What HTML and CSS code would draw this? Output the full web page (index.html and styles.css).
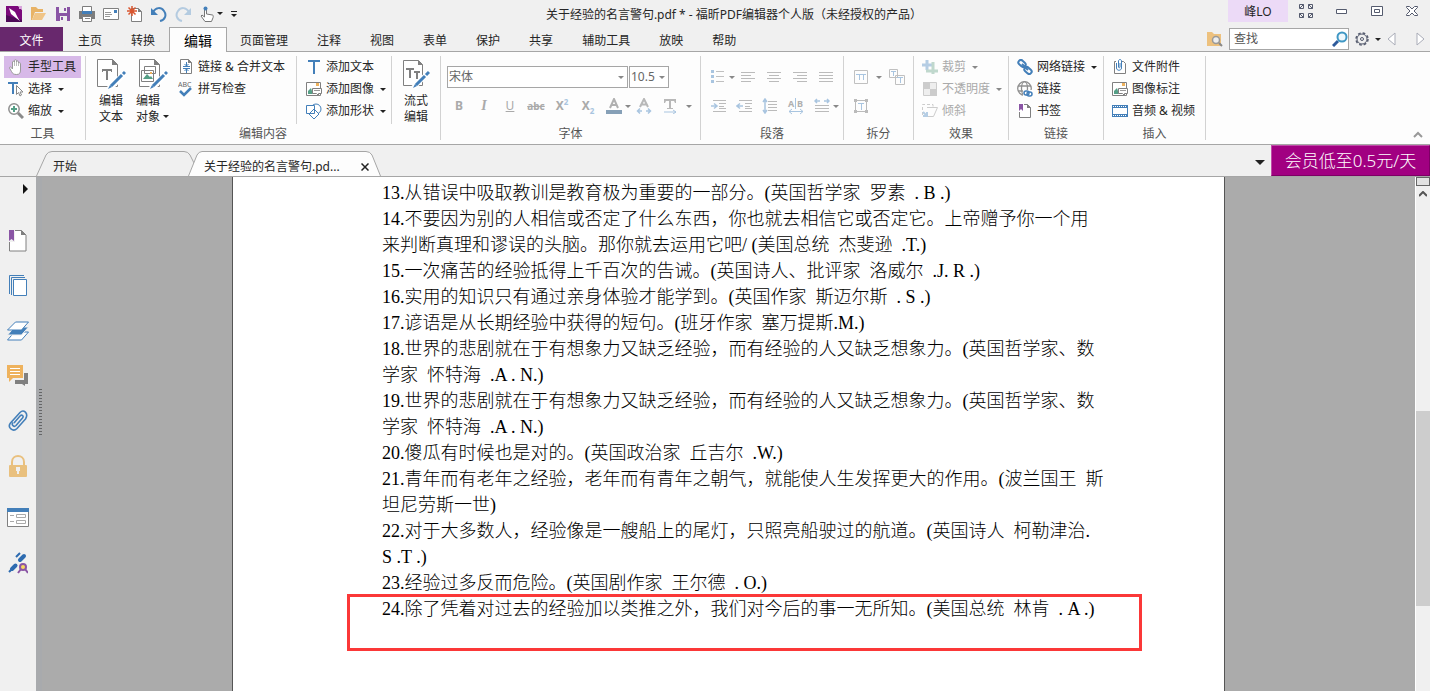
FILE: index.html
```html
<!DOCTYPE html>
<html lang="zh-CN">
<head>
  <meta charset="UTF-8" />
  <meta name="viewport" content="width=device-width, initial-scale=1.0"/>
  <title>关于经验的名言警句.pdf * - 福昕PDF编辑器个人版</title>
  <link rel="stylesheet" href="styles.css">
</head>
<body>

  <!-- Title bar -->
  <header class="titlebar">
    <div class="quick">
      <button class="icon-btn" aria-label="Foxit"><svg width="16" height="16" viewBox="0 0 16 16"><path fill="#7b0a7b" d="M0 0h12l4 4v12H0z"/><path fill="#4e0a58" d="M0 9l16 5v2H0z"/><path fill="#d9a6dc" d="M13 0h3v3h-3z"/><path fill="#fff" d="M3 2l6 4 3 6 2 3-4-3-5-4z"/></svg></button>
      <button class="icon-btn" aria-label="打开"><svg width="17" height="16" viewBox="0 0 17 16"><path fill="#e8b366" d="M1 1h5l2 2h5v3H5L2 14H1z"/><path fill="#f0c587" d="M5 7h11l-4 7H2z"/></svg></button>
      <button class="icon-btn" aria-label="保存"><svg width="16" height="16" viewBox="0 0 16 16"><path fill="#8a55a5" d="M1 1h14v14H1z"/><path fill="#f0f0f0" d="M4 1h8v6H4zM5 10h7v5H5z"/><path fill="#8a55a5" d="M9 2h2v3H9zM6 11h2v3H6z"/></svg></button>
      <button class="icon-btn" aria-label="打印"><svg width="16" height="16" viewBox="0 0 16 16"><path fill="#7d7d7d" d="M0 5h16v8h-3v-2H3v2H0z"/><path fill="#fff" stroke="#7d7d7d" d="M3.500.5h9v5h-9zM3.500 10.500h9v5h-9z"/><path fill="#437fb9" d="M3 5h10v3H3z"/><path stroke="#888" d="M6 12.500h5"/></svg></button>
      <button class="icon-btn" aria-label="邮件"><svg width="16" height="16" viewBox="0 0 16 16"><path fill="#fff" stroke="#808080" d="M.5 2.500h15v11H.5z"/><path stroke="#999" d="M2 6.500h6M2 8.500h7M2 10.500h5"/><path fill="#437fb9" d="M11 4h3v3h-3z"/></svg></button>
      <button class="icon-btn" aria-label="新建"><svg width="16" height="16" viewBox="0 0 16 16"><path fill="#fff" stroke="#808080" d="M4.500 2.500h7l3 3v10h-10z"/><path fill="#808080" d="M11 2l4 4h-4z"/><path stroke="#d9562f" stroke-width="1.500" d="M5 0v10M0 5h10M1.500 1.500l7 7M8.500 1.500l-7 7"/></svg></button>
      <button class="icon-btn" aria-label="撤销"><svg width="16" height="16" viewBox="0 0 16 16" fill="none"><path stroke="#437fb9" stroke-width="2" d="M2 6c3-5 8-5 11-1s1 9-4 10"/><path fill="#437fb9" d="M0 2v7h7z"/></svg></button>
      <button class="icon-btn" aria-label="重做"><svg width="16" height="16" viewBox="0 0 16 16" fill="none"><path stroke="#b4cbe0" stroke-width="2" d="M14 6C11 1 6 1 3 5s-1 9 4 10"/><path fill="#b4cbe0" d="M16 2v7H9z"/></svg></button>
      <button class="icon-btn" aria-label="触摸模式"><svg width="16" height="16" viewBox="0 0 16 16"><path fill="#fff" stroke="#777" d="M5.500 11V3c0-1 2-1 2 0v5l6 1c1 0 1 2 0 4l-1 2.500H6L2 10l1-1z"/><circle cx="6.500" cy="2.500" r="2" fill="#437fb9"/></svg></button>
      <span class="caret"></span>
      <button class="icon-btn customize" aria-label="自定义"><span class="caret"></span></button>
    </div>
    <h1 class="title">关于经验的名言警句.pdf * - 福昕PDF编辑器个人版（未经授权的产品）</h1>
    <div class="window-tools">
      <button class="user">峰LO</button>
      <button class="win-btn" aria-label="全屏"><svg width="14" height="14" viewBox="0 0 14 14" fill="none" stroke="#555b6e"><path d="M.5 4V.5H4.500V4.500H.5l4-4M9.500 .5h4v4h-4zM9.500.5l4 4M.5 9.500h4v4h-4zM.5 9.500l4 4M9.500 9.500h4v4h-4zM13.500 9.500l-4 4"/></svg></button>
      <button class="win-btn" aria-label="最小化"><svg width="12" height="12" viewBox="0 0 12 12"><path fill="#fff" stroke="#555b6e" d="M1.500 4.500h10v4h-10z"/></svg></button>
      <button class="win-btn" aria-label="还原"><svg width="12" height="12" viewBox="0 0 12 12"><path fill="#fff" stroke="#555b6e" d="M.5 1.500h11v9H.5zM3.500 4.500h5v3h-5z"/></svg></button>
      <button class="win-btn" aria-label="关闭"><svg width="12" height="12" viewBox="0 0 12 12"><path fill="#fff" stroke="#555b6e" d="M.5 1.500h3L6 4l2.500-2.500h3v1L8 6l3.500 3.500v1h-3L6 8l-2.500 2.500h-3v-1L4 6 .5 2.500z"/></svg></button>
    </div>
  </header>

  <!-- Ribbon tabs -->
  <nav class="tabs">
    <button class="tab file">文件</button>
    <button class="tab">主页</button>
    <button class="tab">转换</button>
    <button class="tab active">编辑</button>
    <button class="tab">页面管理</button>
    <button class="tab">注释</button>
    <button class="tab">视图</button>
    <button class="tab">表单</button>
    <button class="tab">保护</button>
    <button class="tab">共享</button>
    <button class="tab">辅助工具</button>
    <button class="tab">放映</button>
    <button class="tab">帮助</button>
    <div class="search-area">
      <svg width="17" height="16" viewBox="0 0 17 16"><path fill="#edc17e" d="M1 1h5l2 2h7v12H1z"/><circle cx="10" cy="9" r="3.500" fill="#eee" stroke="#999" stroke-width="1.500"/><path stroke="#888" stroke-width="2" d="M13 12l3 3"/></svg>
      <div class="search">
        <input type="text" placeholder="查找" aria-label="查找" />
        <svg width="16" height="16" viewBox="0 0 16 16"><path stroke="#2d5a9b" stroke-width="3" d="M1 15l5-5"/><circle cx="10" cy="6" r="4.500" fill="#eef8fd" stroke="#3f97c4" stroke-width="2"/></svg>
      </div>
      <button class="icon-btn" aria-label="设置"><svg width="14" height="14" viewBox="0 0 14 14" fill="none" stroke="#555b6e"><circle cx="7" cy="7" r="6" stroke-width="1.500" stroke-dasharray="2.700 2"/><circle cx="7" cy="7" r="5"/><circle cx="7" cy="7" r="1.500"/></svg></button>
      <span class="caret"></span>
      <button class="nav-btn" aria-label="上一个"><svg width="9" height="14" viewBox="0 0 9 14"><path fill="#fff" stroke="#aaadb8" d="M8 1v12L1 7z"/></svg></button>
      <button class="nav-btn next" aria-label="下一个"><svg width="9" height="14" viewBox="0 0 9 14"><path fill="#fff" stroke="#aaadb8" d="M1 1v12l7-6z"/></svg></button>
    </div>
  </nav>

  <!-- Ribbon -->
  <section class="ribbon">
    <div class="group g-tools">
      <div class="group-body">
        <div class="rows">
          <button class="row-btn selected"><svg width="16" height="16" viewBox="0 0 16 16"><path fill="#fff" stroke="#999" d="M4.500 10V3c0-1 2-1 2 0V1.500c0-1 2-1 2 0V3c0-1.500 2-1.500 2 0v1.500c0-1 2-1 2 0V11c0 3-1 4.500-4 4.500-3 0-4-1-5-3L1.500 9c0-1.500 1.500-1.500 3 1z"/><path stroke="#bbb" d="M6.500 3v4M8.500 3v4M10.500 4v3"/></svg>手型工具</button>
          <button class="row-btn"><svg width="16" height="16" viewBox="0 0 16 16"><path fill="#437fb9" d="M0 1h10v2H6v10H4V3H0z"/><path fill="#fff" stroke="#888" d="M8.500 4.500v9l2-2 1.500 3.500 1.500-1-1.500-3h3z"/></svg>选择<span class="caret"></span></button>
          <button class="row-btn"><svg width="16" height="16" viewBox="0 0 16 16"><circle cx="6" cy="6" r="5.200" fill="#fff" stroke="#909090" stroke-width="1.500"/><path stroke="#8a8a8a" stroke-width="3" d="M10 10l5 5"/><path stroke="#559f86" stroke-width="2" d="M6 3v6M3 6h6"/></svg>缩放<span class="caret"></span></button>
        </div>
      </div>
      <div class="group-label">工具</div>
    </div>

    <div class="group g-content">
      <div class="group-body">
        <button class="big-btn"><svg width="30" height="30" viewBox="0 0 30 30"><path fill="#fff" stroke="#808080" d="M1.500.5h15l5 5v22h-20z"/><path fill="#808080" d="M16 0l6 6h-6z"/><path fill="#808080" d="M6 10h10v3h-1v-1h-3v9h-2v-9H7v1H6z"/><path stroke="#fff" stroke-width="6" d="M13 30l16-16"/><path stroke="#437fb9" stroke-width="3" d="M15 27l11-11M27 15l2-2"/><path fill="#437fb9" d="M12 30l2-4 2 2z"/></svg><span>编辑<br>文本</span></button>
        <button class="big-btn second"><svg width="30" height="30" viewBox="0 0 30 30"><path fill="#fff" stroke="#808080" d="M1.500.5h15l5 5v22h-20z"/><path fill="#808080" d="M16 0l6 6h-6z"/><path fill="#fff" stroke="#808080" d="M6.500 7.500h11v7h-11zM3.500 11.500h12v11h-12z"/><path fill="#559f86" d="M5 20l4-5 3 3 1-1 2 3z"/><path fill="#eeb25d" d="M12 13h2v2h-2z"/><path stroke="#fff" stroke-width="6" d="M13 30l16-16"/><path stroke="#437fb9" stroke-width="3" d="M15 27l11-11M27 15l2-2"/><path fill="#437fb9" d="M12 30l2-4 2 2z"/></svg><span>编辑<br>对象<i class="caret"></i></span></button>
        <div class="rows merge">
          <button class="row-btn"><svg width="16" height="16" viewBox="0 0 16 16"><path fill="#fff" stroke="#808080" d="M2.500.5h8l3 3v11h-11z"/><path fill="#808080" d="M10 0l4 4h-4z"/><path stroke="#437fb9" fill="none" d="M5 7.500h7M5 9.500h7M8.500 3v4M8.500 10v4M6.500 5l2 2 2-2M6.500 12l2-2 2 2"/></svg>链接 &amp; 合并文本</button>
          <button class="row-btn"><svg width="16" height="16" viewBox="0 0 16 16" fill="none"><text class="abc-glyph" x="0" y="6">ABC</text><path stroke="#437fb9" stroke-width="2.500" d="M2 10l4 4 7-7"/></svg>拼写检查</button>
        </div>
        <div class="rows boxed">
          <button class="row-btn"><svg width="16" height="16" viewBox="0 0 16 16"><path fill="#437fb9" d="M2 1h12v2H9v12H7V3H2z"/></svg>添加文本</button>
          <button class="row-btn"><svg width="16" height="16" viewBox="0 0 16 16"><path fill="#fff" stroke="#808080" d="M.5 1.500h14v13H.5z"/><path fill="#559f86" d="M2 10l3-3 2 6H2z"/><path fill="#eeb25d" d="M10 2h3v3h-3z"/><path fill="#fff" stroke="#808080" d="M6.500 7.500h9v5h-3v2l-2-2h-4z"/><path stroke="#999" d="M8 9.500h6"/></svg>添加图像<span class="caret"></span></button>
          <button class="row-btn"><svg width="16" height="16" viewBox="0 0 16 16" fill="#fff" stroke="#437fb9"><circle cx="10" cy="6" r="5"/><path d="M.5 2.500h8v8h-8zM8 6l5 5-5 5-5-5z"/></svg>添加形状<span class="caret"></span></button>
        </div>
        <button class="big-btn flow"><svg width="28" height="30" viewBox="0 0 28 30"><path fill="#fff" stroke="#808080" d="M1.500 1.500h15l4 4v21h-19z"/><path fill="#808080" d="M16 1l5 5h-5z"/><path fill="#808080" d="M4 9h8v2H9v8H7v-8H4zM12 12h6v2h-2v6h-2v-6h-2z"/><path stroke="#fff" stroke-width="5" d="M11 29l15-15"/><path stroke="#437fb9" stroke-width="3" d="M14 26l9-9M24 16l3-3"/><path fill="#437fb9" d="M11 29l2-4 2 2z"/></svg><span>流式<br>编辑</span></button>
      </div>
      <div class="group-label">编辑内容</div>
    </div>

    <div class="group g-font">
      <div class="group-body stacked">
        <div class="selects">
          <div class="select family"><select aria-label="字体"><option>宋体</option></select></div>
          <div class="select size"><select aria-label="字号"><option>10.5</option></select></div>
        </div>
        <div class="tool-row disabled">
          <button class="cell b">B</button>
          <button class="cell i">I</button>
          <button class="cell u">U</button>
          <button class="cell s">abc</button>
          <button class="cell b">X<sup>2</sup></button>
          <button class="cell b">X<sub>2</sub></button>
          <button class="cell" aria-label="字体颜色"><svg width="18" height="16" viewBox="0 0 18 16"><path fill="none" stroke="#b0b0b0" stroke-width="2" d="M5 10l4-9 4 9M6.500 7h5"/><path fill="#86a0b7" d="M1 12h16v4H1z"/></svg></button>
          <span class="caret over"></span>
          <button class="cell" aria-label="字符间距"><svg width="16" height="16" viewBox="0 0 16 16" fill="none"><path stroke="#b8b8b8" stroke-width="2" d="M4 9l4-8 4 8M5.500 6.500h5"/><path stroke="#a9c5e0" stroke-width="1.500" d="M2 13h4M10 13h4M4 10.500L1.500 13 4 15.500M12 10.500l2.500 2.500-2.500 2.500"/></svg></button>
          <button class="cell" aria-label="水平缩放"><svg width="16" height="16" viewBox="0 0 16 16"><path fill="#b8b8b8" d="M2 1h12v4h-1l-1-2H9v7h2v1H5v-1h2V3H4L3 5H2z"/><path stroke="#a9c5e0" fill="none" d="M2 14h12M11 12l3 2-3 2"/></svg></button>
          <span class="caret tail"></span>
        </div>
      </div>
      <div class="group-label">字体</div>
    </div>

    <div class="group g-para">
      <div class="group-body stacked">
        <div class="tool-row first disabled">
          <button class="cell" aria-label="项目符号"><svg width="16" height="16" viewBox="0 0 16 16"><path fill="#a9c5e0" d="M1 1h3v3H1zM1 6h3v3H1zM1 11h3v3H1z"/><path stroke="#c0c0c0" d="M6 2.500h8M6 7.500h8M6 12.500h8"/></svg></button>
          <span class="caret over"></span>
          <button class="cell" aria-label="左对齐"><svg width="16" height="14" viewBox="0 0 16 14" stroke="#bbb"><path d="M1 2.500h14M1 5.500h10M1 8.500h14M1 11.500h10"/></svg></button>
          <button class="cell" aria-label="居中"><svg width="16" height="14" viewBox="0 0 16 14" stroke="#bbb"><path d="M1 2.500h14M3 5.500h10M1 8.500h14M3 11.500h10"/></svg></button>
          <button class="cell" aria-label="右对齐"><svg width="16" height="14" viewBox="0 0 16 14" stroke="#bbb"><path d="M1 2.500h14M5 5.500h10M1 8.500h14M5 11.500h10"/></svg></button>
          <button class="cell" aria-label="两端对齐"><svg width="16" height="14" viewBox="0 0 16 14" stroke="#bbb"><path d="M1 2.500h14M1 5.500h14M1 8.500h14M1 11.500h14"/></svg></button>
        </div>
        <div class="tool-row disabled">
          <button class="cell" aria-label="增加缩进"><svg width="16" height="16" viewBox="0 0 16 16" fill="none"><path stroke="#bbb" d="M3 2.500h13M9 5.500h7M9 8.500h5M9 10.500h7M3 13.500h13"/><path stroke="#a9c5e0" stroke-width="1.500" d="M1 8h6M4 5.500L7 8l-3 2.500"/></svg></button>
          <button class="cell" aria-label="减少缩进"><svg width="16" height="16" viewBox="0 0 16 16" fill="none"><path stroke="#bbb" d="M3 2.500h13M9 5.500h7M9 8.500h5M9 10.500h7M3 13.500h13"/><path stroke="#a9c5e0" stroke-width="1.500" d="M1 8h6M4 5.500L1 8l3 2.500"/></svg></button>
          <button class="cell" aria-label="行距"><svg width="16" height="16" viewBox="0 0 16 16" fill="none"><path stroke="#bbb" d="M6 3.500h9M6 6.500h9M6 9.500h9M6 12.500h9"/><path stroke="#a9c5e0" stroke-width="1.500" d="M3 1v14M1 4l2-3 2 3M1 12l2 3 2-3"/></svg></button>
          <button class="cell" aria-label="字间距"><svg width="18" height="18" viewBox="0 0 18 18" fill="none"><text class="ab-glyph" x="1" y="10">A</text><text class="ab-glyph" x="10" y="10">B</text><path stroke="#a9c5e0" d="M8.500 1v11M2 14.500h14M5 12l-3 2.500L5 17M13 12l3 2.500-3 2.500"/></svg></button>
          <button class="cell" aria-label="段落缩放"><svg width="16" height="16" viewBox="0 0 16 16" fill="none"><path stroke="#bbb" d="M1 7.500h14M1 10.500h14M1 13.500h14"/><path stroke="#a9c5e0" stroke-width="1.500" d="M1 3h5M10 3h5M3 1L1 3l2 2M13 1l2 2-2 2"/></svg></button>
          <span class="caret over"></span>
        </div>
      </div>
      <div class="group-label">段落</div>
    </div>

    <div class="group g-split">
      <div class="group-body stacked">
        <div class="tool-row first disabled">
          <button class="cell" aria-label="合并"><svg width="16" height="16" viewBox="0 0 16 16" fill="none"><path stroke="#c0c0c0" d="M1.500 1.500h13v13h-13z"/><path stroke="#a9c5e0" d="M3 5.500h10M6.500 5v6M10.500 5v6"/></svg></button>
          <span class="caret"></span>
          <button class="cell" aria-label="链接文本"><svg width="16" height="16" viewBox="0 0 16 16" fill="none"><path stroke="#c0c0c0" d="M.5.5h8v8h-8zM6.500 6.500h9v9h-9z"/><path stroke="#a9c5e0" d="M2 2.500h5M4.500 2v5M8 8.500h6M11.500 8v6"/></svg></button>
        </div>
        <div class="tool-row disabled">
          <button class="cell" aria-label="拆分"><svg width="16" height="16" viewBox="0 0 16 16" fill="none"><path stroke="#bbb" d="M2.500 2.500h11v11h-11z"/><path fill="#bbb" d="M1 1h3v3H1zM12 1h3v3h-3zM1 12h3v3H1zM12 12h3v3h-3z"/><path stroke="#a9c5e0" d="M5 5.500h6M8.500 5v7"/></svg></button>
        </div>
      </div>
      <div class="group-label">拆分</div>
    </div>

    <div class="group g-effect">
      <div class="group-body">
        <div class="rows disabled">
          <button class="row-btn"><svg width="16" height="16" viewBox="0 0 16 16"><path stroke="#b5cde4" stroke-width="3" fill="none" d="M0 6h12M5 1v10"/><path stroke="#c0d8cd" stroke-width="3" fill="none" d="M4 12h12M11 3v12"/></svg>裁剪<span class="caret"></span></button>
          <button class="row-btn"><svg width="16" height="16" viewBox="0 0 16 16"><path fill="#eee" stroke="#ccc" d="M1.500 1.500h13v13h-13z"/><path fill="#ccc" d="M1 1h7v7H1zM8 8h7v7H8z"/></svg>不透明度<span class="caret"></span></button>
          <button class="row-btn"><svg width="16" height="16" viewBox="0 0 16 16" fill="none"><path stroke="#ccc" stroke-dasharray="3 2" d="M.5 12V1.500H11V5"/><path stroke="#ccc" d="M5 4.500h10.500l-4 9H2"/><path stroke="#b5cde4" stroke-width="2" d="M1 9l4 4M5 9v4H1"/></svg>倾斜</button>
        </div>
      </div>
      <div class="group-label">效果</div>
    </div>

    <div class="group g-link">
      <div class="group-body">
        <div class="rows">
          <button class="row-btn"><svg width="16" height="16" viewBox="0 0 16 16" fill="none" stroke="#437fb9" stroke-width="2"><rect x="1" y="2" width="8" height="5" rx="2.500" transform="rotate(42 5 4.500)"/><rect x="7" y="9" width="8" height="5" rx="2.500" transform="rotate(42 11 11.500)"/><path d="M5 5l6 6"/></svg>网络链接<span class="caret"></span></button>
          <button class="row-btn"><svg width="16" height="16" viewBox="0 0 16 16" fill="none"><g stroke="#909090" stroke-width="1.300"><circle cx="7.500" cy="7.500" r="6.800"/><ellipse cx="7.500" cy="7.500" rx="3" ry="6.800"/><path d="M1 5h13M1 10h13"/></g><path fill="#fff" d="M6 9h10v7H6z"/><rect x="7" y="10" width="5" height="4" rx="2" stroke="#437fb9" stroke-width="1.500"/><rect x="10" y="11" width="5" height="4" rx="2" stroke="#437fb9" stroke-width="1.500"/></svg>链接</button>
          <button class="row-btn"><svg width="16" height="16" viewBox="0 0 16 16"><path fill="#fff" stroke="#808080" d="M2.500 1.500h8l3 3v10h-11z"/><path fill="#808080" d="M10 1l4 4h-4z"/><path fill="#fff" d="M1 0h6v9H1z"/><path fill="#8a55a5" d="M2 1h4v7L4 6 2 8z"/></svg>书签</button>
        </div>
      </div>
      <div class="group-label">链接</div>
    </div>

    <div class="group g-insert">
      <div class="group-body">
        <div class="rows">
          <button class="row-btn"><svg width="16" height="16" viewBox="0 0 16 16" fill="none"><path fill="#fff" stroke="#808080" d="M2.500 2.500h9l2 2v10h-11z"/><path fill="#fff" d="M4 0h6v3H4z"/><path stroke="#437fb9" d="M4.500 4v5c0 3 5 3 5 0V2c0-2-3-2-3 0v6c0 1 1.500 1 1.500 0V4"/></svg>文件附件</button>
          <button class="row-btn"><svg width="16" height="16" viewBox="0 0 16 16"><path fill="#fff" stroke="#808080" d="M.5 1.500h14v13H.5z"/><path fill="#559f86" d="M2 10l3-3 2 6H2z"/><path fill="#eeb25d" d="M10 2h3v3h-3z"/><path fill="#fff" stroke="#808080" d="M6.500 7.500h9v5h-3v2l-2-2h-4z"/><path stroke="#999" d="M8 9.500h6"/></svg>图像标注</button>
          <button class="row-btn"><svg width="16" height="16" viewBox="0 0 16 16"><path fill="#437fb9" d="M0 2h16v12H0z"/><path stroke="#fff" stroke-dasharray="1 1" d="M1 3.500h14M1 12.500h14"/><path fill="#fff" d="M1 5h14v6H1z"/></svg>音频 &amp; 视频</button>
        </div>
      </div>
      <div class="group-label">插入</div>
    </div>

    <button class="collapse" aria-label="折叠功能区"><svg width="10" height="7" viewBox="0 0 10 7" fill="none" stroke="#999" stroke-width="2"><path d="M1 6l4-4 4 4"/></svg></button>
  </section>

  <!-- Document tabs -->
  <div class="doc-tabs">
    <button class="doc-tab start">
      <svg class="shape" viewBox="0 0 158 25" preserveAspectRatio="none"><path fill="#f0f0f0" stroke="#a6a6a6" d="M.5 25L10 4q2-3.500 6-3.500h132q4 0 6 3.500l4 8"/></svg>
      <span>开始</span>
    </button>
    <div class="doc-tab current">
      <svg class="shape" viewBox="0 0 193 25" preserveAspectRatio="none"><path fill="#fdfdfd" stroke="#a6a6a6" d="M.5 25L9 4q2-3.500 5-3.500h164q4 0 6 3.500l8.500 21"/></svg>
      <span>关于经验的名言警句.pd...</span>
      <button class="close" aria-label="关闭标签"><svg width="8" height="8" viewBox="0 0 8 8" stroke="#222" stroke-width="1.500"><path d="M.5.5l7 7M7.500.5l-7 7"/></svg></button>
    </div>
    <button class="tab-list" aria-label="标签列表"><span class="caret large"></span></button>
    <a class="promo" href="#">会员低至0.5元/天</a>
  </div>

  <main class="workspace">
    <aside class="sidebar">
      <button class="expand" aria-label="展开"></button>
      <button class="side-btn" aria-label="书签"><svg width="18" height="22" viewBox="0 0 18 22"><path fill="#fff" stroke="#808080" d="M.5.500h12l4.500 4.500v16H.5z"/><path fill="#808080" d="M12 0l5 5h-5z"/><path fill="#f0f0f0" d="M0 0h6v12H0z"/><path fill="#8a55a5" d="M0 0h5v11L2.500 9 0 11z"/></svg></button>
      <button class="side-btn" aria-label="页面"><svg width="18" height="22" viewBox="0 0 18 22" fill="none" stroke="#437fb9"><path d="M15 .5H.5V19M16 2.500H2.500V20"/><path fill="#fff" d="M4.500 4.500h13v16h-13z"/></svg></button>
      <button class="side-btn" aria-label="图层"><svg width="22" height="20" viewBox="0 0 22 20"><path fill="#fff" stroke="#437fb9" d="M7.500 11h14l-7 8H.5z"/><path fill="#437fb9" stroke="#f0f0f0" d="M7.500 6h14l-7 8H.5z"/><path fill="#fff" stroke="#437fb9" d="M8.500 1h13l-7 8H.5z"/></svg></button>
      <button class="side-btn" aria-label="注释"><svg width="22" height="21" viewBox="0 0 22 21"><path fill="#808080" d="M17 8h4v11h-3v2l-3-2H8v-4h9z"/><path fill="#eeb25d" d="M0 0h16v13H6l-4 4v-4H0z"/><path stroke="#fff" d="M3 3.500h10M3 6.500h10M3 9.500h10"/></svg></button>
      <button class="side-btn" aria-label="附件"><svg width="20" height="22" viewBox="0 0 20 22" fill="none" stroke="#437fb9"><path stroke-width="1.600" d="M6 13l6-7c2-2 4 0 2.500 2L8 15.500c-2 2-5-.5-3-3M17.500 9L9 18.500c-4 4-10-1-6.500-5.500L12 2.500c3.500-3.500 9 .5 5.500 6.500"/></svg></button>
      <button class="side-btn" aria-label="安全"><svg width="18" height="22" viewBox="0 0 18 22"><path fill="none" stroke="#e9c07e" stroke-width="2" d="M3 11V7c0-8 12-8 12 0v4"/><rect y="10" width="18" height="12" rx="1" fill="#e9c07e"/><path fill="#f0f0f0" d="M7 12h4v4h-1v3H8v-3H7z"/></svg></button>
      <button class="side-btn lower" aria-label="表单域"><svg width="22" height="20" viewBox="0 0 22 20"><path fill="#fff" stroke="#808080" d="M.5.5h21v18H.5z"/><path fill="#437fb9" d="M0 0h22v4H0z"/><path fill="none" stroke="#aaa" d="M3 7.500h4M3 13.500h4M9.500 6.500h9v3h-9zM9.500 12.500h9v3h-9z"/></svg></button>
      <button class="side-btn" aria-label="签名"><svg width="20" height="22" viewBox="0 0 20 22" fill="none"><path stroke="#2d6bb0" stroke-width="4" stroke-linecap="round" d="M4 17l3.500-3.500M12 8l4-4"/><path stroke="#2d6bb0" stroke-width="2" d="M1 20l4-4M8 5l4-4"/><path stroke="#8a55a5" stroke-width="2" d="M13 17l-3 4M17 17l3 4"/><circle cx="15" cy="15" r="3" fill="#f7d860" stroke="#8a55a5" stroke-width="2"/></svg></button>
    </aside>
    <div class="splitter"><span class="grip"></span></div>

    <div class="canvas">
      <article class="page">
        <p>13.从错误中吸取教训是教育极为重要的一部分。(英国哲学家  罗素  . B .)</p>
        <p>14.不要因为别的人相信或否定了什么东西，你也就去相信它或否定它。上帝赠予你一个用
来判断真理和谬误的头脑。那你就去运用它吧/ (美国总统  杰斐逊  .T.)</p>
        <p>15.一次痛苦的经验抵得上千百次的告诫。(英国诗人、批评家  洛威尔  .J. R .)</p>
        <p>16.实用的知识只有通过亲身体验才能学到。(英国作家  斯迈尔斯  . S .)</p>
        <p>17.谚语是从长期经验中获得的短句。(班牙作家  塞万提斯.M.)</p>
        <p>18.世界的悲剧就在于有想象力又缺乏经验，而有经验的人又缺乏想象力。(英国哲学家、数
学家  怀特海  .A . N.)</p>
        <p>19.世界的悲剧就在于有想象力又缺乏经验，而有经验的人又缺乏想象力。(英国哲学家、数
学家  怀特海  .A . N.)</p>
        <p>20.傻瓜有时候也是对的。(英国政治家  丘吉尔  .W.)</p>
        <p>21.青年而有老年之经验，老年而有青年之朝气，就能使人生发挥更大的作用。(波兰国王  斯
坦尼劳斯一世)</p>
        <p>22.对于大多数人，经验像是一艘船上的尾灯，只照亮船驶过的航道。(英国诗人  柯勒津治.
S .T .)</p>
        <p>23.经验过多反而危险。(英国剧作家  王尔德  . O.)</p>
        <p class="marked">24.除了凭着对过去的经验加以类推之外，我们对今后的事一无所知。(美国总统  林肯  . A .)</p>
      </article>
    </div>

    <div class="scrollbar">
      <span class="split-box"></span>
      <svg width="8" height="6" viewBox="0 0 8 6" fill="none" stroke="#555" stroke-width="2"><path d="M0 5l4-4 4 4"/></svg>
      <span class="thumb"></span>
    </div>
  </main>

</body>
</html>
```

FILE: styles.css
```css
:root {
  --chrome: #f0f0f0;
  --ribbon: #fdfdfd;
  --line: #a6a6a6;
  --sep: #d2d2d2;
  --text: #262626;
  --purple: #68286d;
}

*, *::before, *::after {
  box-sizing: border-box;
}

body {
  margin: 0;
  height: 100vh;
  display: flex;
  flex-direction: column;
  overflow: hidden;
  background: var(--chrome);
  color: var(--text);
  font: 12px/16px "Noto Sans", "Noto Sans CJK SC", sans-serif;
}

button {
  padding: 0;
  border: none;
  background: none;
  color: inherit;
  font: inherit;
  white-space: nowrap;
}

svg {
  display: block;
  flex: none;
}

.caret {
  display: inline-block;
  flex: none;
  width: 0;
  border: 3px solid transparent;
  border-top-color: #222;
  border-bottom: 0;
}

.caret.large {
  border-width: 5px;
  border-bottom: 0;
}

/* title bar */
.titlebar {
  display: flex;
  height: 27px;
}

.quick {
  display: flex;
  align-items: center;
  gap: 8px;
  width: 240px;
  padding-left: 6px;
}

.quick .caret {
  margin-left: -6px;
}

.customize {
  display: flex;
  width: 6px;
  padding-top: 2px;
  border-top: 1px solid #222;
}

.customize .caret {
  margin: 0;
}

.title {
  flex: 1;
  margin: 0;
  font-size: 12px;
  font-weight: 400;
  line-height: 30px;
  text-align: center;
}

.window-tools {
  display: flex;
  width: 202px;
}

.user {
  width: 60px;
  height: 22px;
  padding-top: 2px;
  background: #ecdaf7;
}

.win-btn {
  display: flex;
  flex: 1;
  align-items: center;
  justify-content: center;
  height: 22px;
}

/* ribbon tabs */
.tabs {
  display: flex;
  height: 25px;
  border-bottom: 1px solid var(--line);
}

.tab {
  padding: 4px 14px 0 15px;
}

.tab.file {
  width: 63px;
  padding: 4px 0 0;
  background: var(--purple);
  color: #fff;
}

.tab.active {
  height: 25px;
  margin-right: -2px;
  padding: 2px 14px 0;
  border: 1px solid var(--line);
  border-bottom: 0;
  background: var(--ribbon);
  color: #000;
  font-size: 14px;
}

.search-area {
  display: flex;
  align-items: center;
  gap: 6px;
  margin-left: auto;
  padding-right: 5px;
}

.search {
  display: flex;
  align-items: center;
  width: 120px;
  height: 22px;
  border: 1px solid var(--line);
  background: #fff;
}

.search input {
  flex: 1;
  min-width: 0;
  padding: 0 4px;
  border: 0;
  outline: 0;
  background: none;
  font: inherit;
}

.search input::placeholder {
  color: #555;
}

.nav-btn.next {
  padding-left: 14px;
}

/* ribbon */
.ribbon {
  display: flex;
  height: 93px;
  padding-top: 4px;
  border-bottom: 1px solid var(--line);
  background: var(--ribbon);
}

.group {
  display: flex;
  flex-direction: column;
  flex: none;
  height: 84px;
  border-right: 1px solid var(--sep);
}

.group-body {
  display: flex;
  flex: none;
  height: 68px;
  padding-left: 4px;
}

.group-body.stacked {
  flex-direction: column;
}

.group-label {
  padding-top: 2px;
  color: #555;
  text-align: center;
}

.g-tools { width: 86px; }
.g-content { width: 355px; }
.g-font { width: 260px; }
.g-para { width: 143px; }
.g-split { width: 70px; }
.g-effect { width: 95px; }
.g-link { width: 95px; }
.g-insert { width: 102px; }

.g-content .group-body { padding-left: 10px; }
.g-font .group-body { padding-left: 6px; }

.rows {
  display: flex;
  flex-direction: column;
}

.row-btn {
  display: flex;
  align-items: center;
  gap: 4px;
  height: 22px;
  padding: 0 4px;
}

.row-btn .caret {
  margin-left: 2px;
}

.row-btn.selected {
  padding-right: 5px;
  background: #d7b9e8;
}

.disabled {
  color: #aaa;
}

.disabled .caret {
  border-top-color: #888;
}

.big-btn {
  display: flex;
  flex-direction: column;
  align-items: center;
  width: 30px;
  padding-top: 3px;
}

.big-btn span {
  margin-top: 4px;
}

.big-btn.second {
  align-items: flex-start;
  width: 34px;
  margin-left: 10px;
}

.big-btn.second svg {
  margin-left: 2px;
}

.big-btn.second .caret {
  margin: 0 0 3px 3px;
}

.big-btn.second span {
  text-align: left;
}

.merge {
  width: 122px;
  margin-left: 4px;
}

.boxed {
  width: 96px;
  height: 68px;
  padding-left: 5px;
  border: solid var(--sep);
  border-width: 0 1px;
}

.flow {
  width: 48px;
}

.selects {
  display: flex;
  gap: 1px;
  padding: 10px 0 6px;
}

.select {
  position: relative;
  height: 22px;
}

.select select {
  width: 100%;
  height: 22px;
  padding: 0 1px;
  border: 1px solid var(--line);
  border-radius: 0;
  appearance: none;
  background: #fff;
  color: #666;
  font: inherit;
}

.select::after {
  content: "";
  position: absolute;
  top: 10px;
  right: 4px;
  border: 3px solid transparent;
  border-top-color: #888;
  border-bottom: 0;
}

.family { width: 181px; }
.size { width: 40px; }

.tool-row {
  display: flex;
  align-items: center;
  height: 24px;
}

.tool-row.first {
  height: 26px;
  margin: 8px 0 4px;
}

.cell {
  display: flex;
  align-items: center;
  justify-content: center;
  width: 26px;
  height: 24px;
}

.g-font .cell:first-child {
  width: 24px;
}

.cell.b, .cell.i, .cell.u {
  font-weight: 700;
}

.cell.i {
  font-family: "Liberation Serif", serif;
  font-size: 14px;
  font-style: italic;
}

.cell.u {
  font-weight: 400;
  text-decoration: underline;
}

.cell.s {
  font-weight: 700;
  font-size: 10px;
  text-decoration: line-through;
}

.cell sup, .cell sub {
  color: #a9c5e0;
  font-size: 8px;
  line-height: 8px;
}

.cell sup { align-self: flex-start; padding-top: 4px; }
.cell sub { align-self: flex-end; padding-bottom: 3px; }

/* drop arrow that overlaps the edge of its button */
.caret.over {
  margin-left: -2px;
}

.caret.tail {
  margin-left: 3px;
}

.g-split .caret {
  margin: 0 2px;
}

.abc-glyph {
  fill: #666;
  font: 7px "Noto Sans", sans-serif;
}

.ab-glyph {
  fill: #b0b0b0;
  font: 700 9px "Noto Sans", sans-serif;
}

.collapse {
  align-self: flex-end;
  margin: 0 7px 6px auto;
}

/* document tabs */
.doc-tabs {
  display: flex;
  align-items: flex-end;
  height: 32px;
  border-bottom: 1px solid var(--line);
}

.doc-tab {
  position: relative;
  display: flex;
  align-items: center;
  height: 25px;
  padding-top: 6px;
}

.doc-tab span {
  position: relative;
}

.shape {
  position: absolute;
  inset: 0;
  width: 100%;
  height: 100%;
}

.start {
  width: 158px;
  margin-left: 36px;
  padding-left: 17px;
}

.current {
  width: 193px;
  margin-left: -6px;
  padding-left: 16px;
}

.close {
  position: relative;
  margin: 0 12px 0 auto;
}

.tab-list {
  display: flex;
  align-items: center;
  height: 31px;
  margin-left: auto;
  padding: 3px 6px 0 0;
}

.promo {
  width: 159px;
  height: 31px;
  border: 1px solid #7d0064;
  border-top-color: #c04ba8;
  border-left-color: #c04ba8;
  background: #a10081;
  color: #fff;
  font-size: 17px;
  font-weight: 300;
  line-height: 30px;
  text-align: center;
  text-decoration: none;
}

/* workspace */
.workspace {
  display: flex;
  flex: 1;
  min-height: 0;
}

.sidebar {
  display: flex;
  flex-direction: column;
  width: 36px;
}

.expand {
  align-self: flex-end;
  margin: 7px 8px 24px 0;
  border: 5px solid transparent;
  border-left-color: #111;
  border-right: 0;
}

.side-btn {
  display: flex;
  align-items: center;
  justify-content: center;
  flex: none;
  height: 45px;
}

.side-btn.lower {
  margin-top: 7px;
}

.splitter {
  display: flex;
  align-items: center;
  width: 6px;
  padding-left: 3px;
  background: #a8aaad;
}

.grip {
  width: 3px;
  height: 47px;
  margin-bottom: 44px;
  background: repeating-linear-gradient(#666 0 1px, transparent 1px 3px);
}

.canvas {
  display: flex;
  flex: 1;
  justify-content: center;
  overflow: hidden;
  background: #ababab;
}

.page {
  width: 993px;
  padding: 3px 0 0 149px;
  border: solid #555;
  border-width: 0 1px;
  background: #fff;
  color: #000;
  font: 300 18px/26px "Liberation Serif", "Noto Sans CJK SC", serif;
}

.page p {
  margin: 0;
  white-space: pre;
}

.marked {
  position: relative;
}

/* red annotation rectangle */
.marked::after {
  content: "";
  position: absolute;
  top: -2px;
  left: -35px;
  width: 795px;
  height: 57px;
  border: 3px solid #fb3838;
}

.scrollbar {
  display: flex;
  flex-direction: column;
  align-items: center;
  width: 15px;
  border-left: 1px solid #fff;
}

.split-box {
  width: 100%;
  height: 9px;
  margin-bottom: 5px;
  border: 1px solid #666;
  background: #e2e2e2;
}

.thumb {
  width: 100%;
  height: 38%;
  margin-top: 214px;
  background: #cdcdcd;
}
```
